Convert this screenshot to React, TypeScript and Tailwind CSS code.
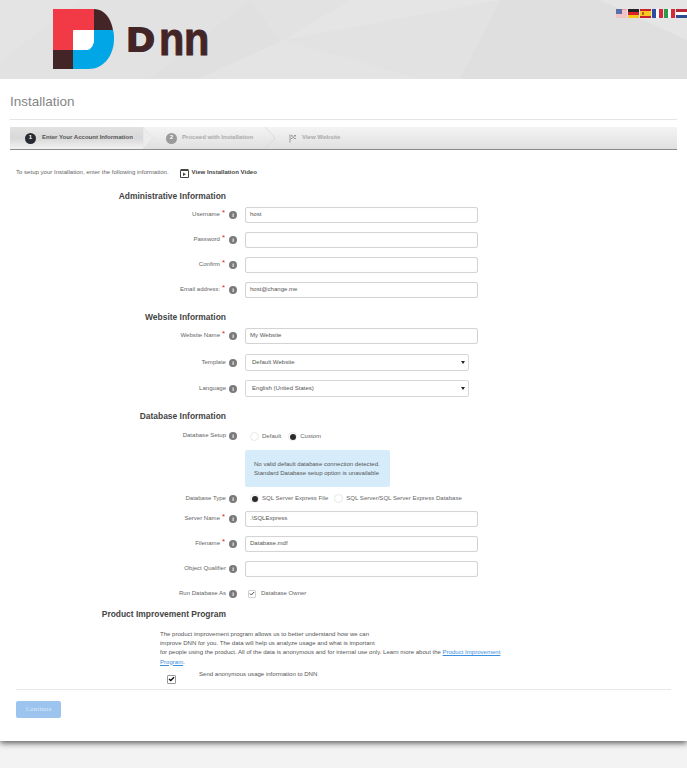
import { FC, ReactNode } from "react"

const Logo: FC = () => {
    return <div className="flex items-start">
        <svg width="61" height="60" viewBox="0 0 61 60" className="block">
            <path d="M0 0H41V21H20V41H0Z" fill="#f23a46" />
            <path d="M41 0C51 0 58 9 60 21H41Z" fill="#432527" />
            <path d="M41 21H60C61 24 61 27 61 30C61 47 50 60 36 60H20V41H33C38 41 41 36 41 30Z" fill="#00a6e6" />
            <path d="M22 21H41V30C41 36 38 41 33 41H20V23Z" fill="#ffffff" />
            <path d="M0 41H20V60H0Z" fill="#432527" />
        </svg>
        <div className="ml-[13px] mt-[14px] flex h-[32px] items-end font-['Liberation_Sans',sans-serif] font-bold leading-none text-[#432527]">
            <span className="w-[32px] origin-left scale-x-[1.12] text-[34px] leading-[32px] [-webkit-text-stroke:2px_#432527]">D</span>
            <span className="w-[25px] origin-left scale-x-[0.9] text-[46px] leading-[32px] [-webkit-text-stroke:1px_#432527]">n</span>
            <span className="w-[24px] origin-left scale-x-[0.9] text-[46px] leading-[32px] [-webkit-text-stroke:1px_#432527]">n</span>
        </div>
    </div>
}

const Flags: FC = () => {
    return <div className="flex gap-[1px] pt-[9px]">
        <svg width="11" height="9" viewBox="0 0 11 9">
            <rect width="11" height="9" fill="#f2a0a8" />
            <path d="M0 2H11M0 4H11M0 6H11M0 8H11" stroke="#f4e6e8" strokeWidth="1" />
            <rect width="6" height="5" fill="#5a6fa8" />
        </svg>
        <svg width="11" height="9" viewBox="0 0 11 9">
            <rect width="11" height="3" fill="#222" />
            <rect y="3" width="11" height="3" fill="#d8232a" />
            <rect y="6" width="11" height="3" fill="#f5c518" />
        </svg>
        <svg width="11" height="9" viewBox="0 0 11 9">
            <rect width="11" height="9" fill="#c8222c" />
            <rect y="2" width="11" height="5" fill="#f8c61e" />
            <rect x="2" y="3" width="2" height="3" fill="#b5642a" />
        </svg>
        <svg width="11" height="9" viewBox="0 0 11 9">
            <rect width="4" height="9" fill="#2c4da0" />
            <rect x="4" width="3" height="9" fill="#ffffff" />
            <rect x="7" width="4" height="9" fill="#d6293a" />
        </svg>
        <svg width="11" height="9" viewBox="0 0 11 9">
            <rect width="4" height="9" fill="#2f9a4b" />
            <rect x="4" width="3" height="9" fill="#ffffff" />
            <rect x="7" width="4" height="9" fill="#d6293a" />
        </svg>
        <svg width="11" height="9" viewBox="0 0 11 9">
            <rect width="11" height="3" fill="#b8283a" />
            <rect y="3" width="11" height="3" fill="#ffffff" />
            <rect y="6" width="11" height="3" fill="#2b4d90" />
        </svg>
    </div>
}

const Header: FC = () => {
    return <div className="relative flex h-[79px] justify-between overflow-hidden bg-[#e2e2e2] pl-[53px] pt-[9px]">
        <svg className="absolute left-0 top-0" width="687" height="79" viewBox="0 0 687 79">
            <path d="M0 0H80L0 62Z" fill="#e4e4e4" />
            <path d="M250 0L280 42L195 79H150Z" fill="#e0e0e0" />
            <path d="M280 42L350 0H500L283 40Z" fill="#e5e5e5" />
            <path d="M283 40L420 79H200Z" fill="#e4e4e4" />
            <path d="M500 0L460 79H687V40L600 0Z" fill="#dfdfdf" />
            <path d="M600 0H687V40Z" fill="#e5e5e5" />
        </svg>
        <div className="relative"><Logo /></div>
        <div className="relative -mt-[9px]"><Flags /></div>
    </div>
}

const Info: FC = () => {
    return <span className="flex h-[8px] w-[8px] items-center justify-center rounded-full bg-[#7a7a7a] text-[6px] font-bold leading-none text-white">i</span>
}

interface RowProp {
    label: string;
    required?: boolean;
    children: ReactNode;
}

const Row: FC<RowProp> = ({ label, required, children }) => {
    return <div className="flex h-[25px] items-center">
        <div className="flex w-[226px] items-center justify-end pb-[1px] text-[6.06px] leading-[9px] text-[#666666]">
            {label}
            {required ? <span className="ml-[2px] w-[4px] pb-[3px] text-[8px] leading-[8px] text-[#e02020]">*</span> : null}
        </div>
        <div className="flex w-[14px] justify-center"><Info /></div>
        <div className="w-[5px]"></div>
        {children}
    </div>
}

const Field: FC<{ value?: string }> = ({ value }) => {
    return <div className="flex h-[16px] w-[233px] items-center rounded-[2px] border border-[#d4d4d4] bg-white pl-[4px] text-[6.06px] text-[#555555] shadow-[inset_0_0_1px_#e4e4e4]">
        {value}
    </div>
}

const Select: FC<{ value: string }> = ({ value }) => {
    return <div className="flex h-[17px] w-[224px] items-center justify-between rounded-[2px] border border-[#d8d8d8] bg-white pl-[6px] pr-[3px] text-[6.06px] text-[#555555]">
        {value}
        <span className="h-0 w-0 border-x-[2px] border-t-[3px] border-x-transparent border-t-[#222222]"></span>
    </div>
}

const Radio: FC<{ label: string; checked?: boolean }> = ({ label, checked }) => {
    return <div className="flex items-center gap-[3px] text-[6.06px] text-[#666666]">
        <span className="flex h-[9px] w-[9px] items-center justify-center rounded-full border border-[#e8e8e8] bg-white">
            {checked ? <span className="h-[6px] w-[6px] rounded-full bg-[#2a2a2a]"></span> : null}
        </span>
        {label}
    </div>
}

const Heading: FC<{ children: ReactNode; className?: string }> = ({ children, className }) => {
    return <div className={"w-[226px] text-right text-[8.45px] font-bold leading-[12px] text-[#444444] " + (className ?? "")}>
        {children}
    </div>
}

const Wizard: FC = () => {
    return <div className="flex h-[23px] items-stretch border-b border-[#8a8a8a] bg-gradient-to-b from-[#f4f4f4] to-[#e0e0e0] text-[6.06px] font-bold">
        <div className="relative flex w-[133px] items-center bg-gradient-to-b from-[#e2e2e2] via-[#d8d8d8] to-[#f2f2f2] pl-[15px] text-[#555555]">
            <span className="mr-[6px] flex h-[11px] w-[11px] items-center justify-center rounded-full bg-[#2a2a32] text-white">1</span>
            Enter Your Account Information
            <svg className="absolute left-full top-0" width="11" height="22" viewBox="0 0 11 22">
                <path d="M0 0L10 11L0 22Z" fill="#ececec" stroke="#dddddd" strokeWidth="0.5" />
            </svg>
        </div>
        <div className="flex w-[124px] items-center pl-[23px] text-[#aaaaaa]">
            <span className="mr-[5px] flex h-[11px] w-[11px] items-center justify-center rounded-full bg-[#9a9a9a] text-white">2</span>
            Proceed with Installation
        </div>
        <svg className="-ml-[2px] shrink-0" width="11" height="22" viewBox="0 0 11 22">
            <path d="M0 0L10 11L0 22" fill="none" stroke="#d4d4d4" strokeWidth="0.7" />
        </svg>
        <div className="flex items-center pl-[13px] text-[#aaaaaa]">
            <svg className="mr-[5px]" width="8" height="9" viewBox="0 0 8 9">
                <path d="M1 0.5V8.5" stroke="#999999" />
                <path d="M2 1H3.5V2.5H2ZM5 1H7V2.5H5ZM3.5 2.5H5V4H3.5ZM2 4H3.5V5H2ZM5 4H7V5H5Z" fill="#999999" />
            </svg>
            View Website
        </div>
    </div>
}

export default function App() {
    return <div className="flex min-h-[768px] flex-col bg-[#f3f3f3] font-['Liberation_Sans',Arial,sans-serif]">
        <Header />
        <div className="h-[662px] bg-white shadow-[0_2px_6px_rgba(0,0,0,0.65)]">
            <div className="mx-[10px] border-b border-[#e4e4e4] pb-[8px] pt-[14px] text-[13.5px] leading-[18px] text-[#858585]">Installation</div>
            <div className="mx-[10px] mt-[7px]"><Wizard /></div>

            <div className="mt-[17px] flex h-[12px] items-center pl-[16px] text-[6.06px] text-[#666666]">
                To setup your Installation, enter the following information.
                <svg className="ml-[11px] mr-[3px]" width="9" height="9" viewBox="0 0 9 9">
                    <path d="M0.5 1.5H8.5V8.5H0.5Z" fill="none" stroke="#444444" />
                    <path d="M0.5 0.5H8.5" stroke="#444444" />
                    <path d="M3 3.5L6 5.2L3 7Z" fill="#444444" />
                </svg>
                <span className="font-bold text-[#444444]">View Installation Video</span>
            </div>

            <Heading className="mt-[11px]">Administrative Information</Heading>
            <div>
                <Row label="Username" required><Field value="host" /></Row>
                <Row label="Password" required><Field /></Row>
                <Row label="Confirm" required><Field /></Row>
                <Row label="Email address:" required><Field value="host@change.me" /></Row>
            </div>

            <Heading className="mt-[9px]">Website Information</Heading>
            <div>
                <Row label="Website Name" required><Field value="My Website" /></Row>
                <div className="mt-[2px]"><Row label="Template"><Select value="Default Website" /></Row></div>
                <div className="mt-[1px]"><Row label="Language"><Select value="English (United States)" /></Row></div>
            </div>

            <Heading className="mt-[9px]">Database Information</Heading>
            <div className="mt-[1px]">
                <Row label="Database Setup">
                    <div className="flex gap-[7px] pl-[5px] pt-[2px]">
                        <Radio label="Default" />
                        <Radio label="Custom" checked />
                    </div>
                </Row>
            </div>
            <div className="ml-[245px] mt-[2px] flex h-[37px] w-[145px] flex-col justify-center rounded-[2px] bg-[#d6ecfb] pl-[9px] text-[6.06px] leading-[9px] text-[#555555]">
                <span>No valid default database connection detected.</span>
                <span>Standard Database setup option is unavailable</span>
            </div>
            <div className="mt-[-1px]">
                <Row label="Database Type">
                    <div className="flex gap-[6px] pl-[5px]">
                        <Radio label="SQL Server Express File" checked />
                        <Radio label="SQL Server/SQL Server Express Database" />
                    </div>
                </Row>
            </div>
            <div className="mt-[-5px]">
                <Row label="Server Name" required><Field value=".\SQLExpress" /></Row>
            </div>
            <Row label="Filename" required><Field value="Database.mdf" /></Row>
            <Row label="Object Qualifier"><Field /></Row>
            <Row label="Run Database As">
                <div className="flex items-center gap-[5px] pl-[3px] text-[6.06px] text-[#666666]">
                    <span className="flex h-[8px] w-[8px] items-center justify-center rounded-[1px] border border-[#d0d0d0] bg-white">
                        <svg width="6" height="5" viewBox="0 0 6 5"><path d="M0.8 2.5L2.3 4L5.2 1" fill="none" stroke="#444444" strokeWidth="1" /></svg>
                    </span>
                    Database Owner
                </div>
            </Row>

            <Heading className="mt-[2px]">Product Improvement Program</Heading>
            <div className="ml-[160px] mt-[10px] w-[345px] text-[6.06px] leading-[9.2px] text-[#555555]">
                The product improvement program allows us to better understand how we can<br />
                improve DNN for you. The data will help us analyze usage and what is important<br />
                for people using the product. All of the data is anonymous and for internal use only. Learn more about the <span className="text-[#3b8fe0] underline">Product Improvement</span><br />
                <span className="text-[#3b8fe0] underline">Program</span>.
            </div>
            <div className="ml-[167px] mt-[3px] flex items-start text-[6.06px] leading-[9px] text-[#555555]">
                <span className="mt-[5px] flex h-[9px] w-[9px] items-center justify-center rounded-[1px] border border-[#999999] bg-white">
                    <svg width="7" height="6" viewBox="0 0 7 6"><path d="M1 3L2.8 4.6L6 1.2" fill="none" stroke="#111111" strokeWidth="1.4" /></svg>
                </span>
                <span className="ml-[23px]">Send anonymous usage information to DNN</span>
            </div>
            <div className="mx-[16px] mt-[5px] border-t border-[#e8e8e8]"></div>
            <button className="ml-[16px] mt-[11px] flex h-[17px] w-[45px] items-center justify-center rounded-[2px] bg-[#9cc4ee] font-['Liberation_Serif',serif] text-[6.5px] font-bold text-[#c9def5]">Continue</button>
        </div>
    </div>
}
